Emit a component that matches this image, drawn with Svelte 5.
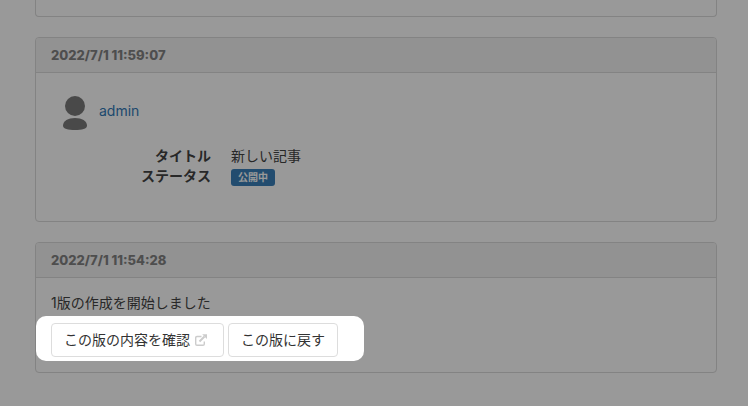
<script lang="ts">
  const status = { title: "新しい記事", label: "公開中" };
</script>

<main class="history">
  <section class="panel previous"></section>

  <section class="panel">
    <h3 class="panel-heading">2022/7/1 11:59:07</h3>
    <div class="panel-body revision">
      <div class="user">
        <svg class="avatar" viewBox="0 0 24 34" aria-hidden="true">
          <circle cx="12" cy="10" r="10" />
          <path d="M0 29.5C0 25 5 22 12 22s12 3 12 7.500C24 33 19 34 12 34S0 33 0 29.500z" />
        </svg>
        <a href="#admin">admin</a>
      </div>
      <dl>
        <dt>タイトル</dt>
        <dd>{status.title}</dd>
        <dt>ステータス</dt>
        <dd><span class="label">{status.label}</span></dd>
      </dl>
    </div>
  </section>

  <section class="panel">
    <h3 class="panel-heading">2022/7/1 11:54:28</h3>
    <div class="panel-body">
      <p>1版の作成を開始しました</p>
      <div class="actions">
        <button type="button">
          この版の内容を確認
          <svg class="external" viewBox="0 0 12 12" aria-hidden="true">
            <path d="M6.500 2.500H2Q.7 2.500 .7 3.800V10Q.7 11.300 2 11.300H8Q9.300 11.300 9.300 10V7.500" />
            <path d="M4.500 7.500L9.500 2.500" class="shaft" />
            <path d="M7.200.2H12V5L10.400 3.500 8.700 1.800z" class="head" />
          </svg>
        </button>
        <button type="button">この版に戻す</button>
      </div>
    </div>
  </section>
</main>

<style>
  :global(body) { margin: 0; background: #fff; }
  .history {
    box-sizing: border-box;
    min-height: 100vh;
    padding: 0 31px 0 35px;
    font: 14px/20px Inter, "Noto Sans CJK JP", sans-serif;
    color: #444;
  }
  .panel {
    margin-bottom: 20px;
    border: 1px solid #dadada;
    border-radius: 4px;
  }
  .previous { height: 16px; border-top: 0; border-radius: 0 0 4px 4px; }
  .panel-heading {
    margin: 0;
    padding: 7px 15px;
    border-bottom: 1px solid #dadada;
    border-radius: 3px 3px 0 0;
    background: #f3f3f3;
    color: #838383;
    font-size: 13px;
    font-weight: 800;
  }
  .panel-body { padding: 15px; }
  .revision { padding: 23px 15px 35px 27px; }
  .user { display: flex; align-items: center; gap: 12px; }
  .avatar { width: 24px; height: 34px; fill: #7b7b7b; }
  a { color: #337ab7; text-decoration: none; margin-bottom: 4px; }
  dl {
    display: grid;
    grid-template-columns: 148px 1fr;
    column-gap: 20px;
    margin: 16px 0 0;
  }
  dt { text-align: right; font-weight: 700; }
  dd { margin: 0; }
  .label {
    display: block;
    width: fit-content;
    margin-top: 3px;
    padding: 0 7px;
    border-radius: 3px;
    background: #3a7fb9;
    color: #fff;
    font-size: 10px;
    font-weight: 700;
    line-height: 17px;
  }
  p { margin: 0 0 10px; }
  .actions { position: relative; display: flex; gap: 4px; width: fit-content; }
  /* spotlight: everything outside the rounded box is dimmed */
  .actions::after {
    content: "";
    position: absolute;
    inset: -7px -26px -4px -15px;
    border-radius: 10px;
    box-shadow: 0 0 0 200vmax rgba(0, 0, 0, .4);
    pointer-events: none;
  }
  button {
    display: flex;
    align-items: center;
    gap: 5px;
    padding: 6px 12px;
    border: 1px solid #ddd;
    border-radius: 4px;
    background: #fff;
    color: #333;
    font: inherit;
  }
  .external { width: 12px; height: 12px; margin-right: 4px; fill: none; stroke: #ccc; stroke-width: 1.4; }
  .external .shaft { stroke-width: 2; }
  .external .head { fill: #ccc; stroke: none; }
</style>
